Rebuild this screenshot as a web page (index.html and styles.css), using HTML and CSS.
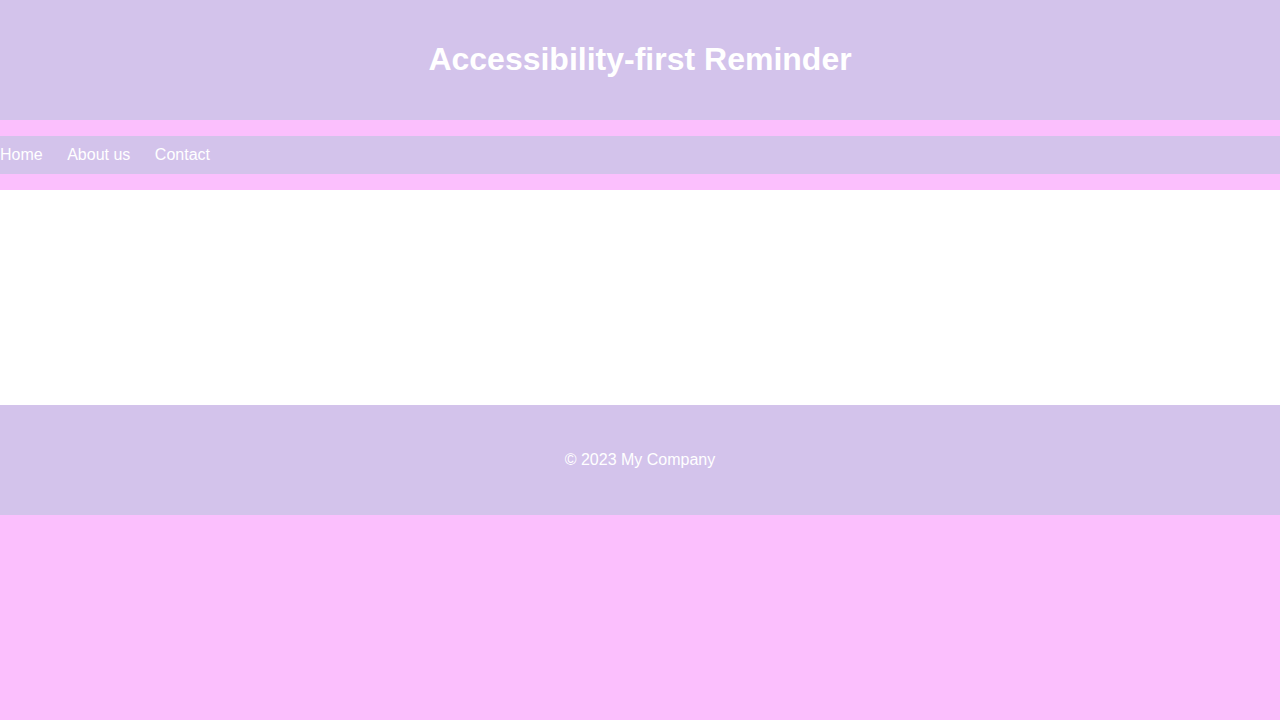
FILE: index.html
```html
<!DOCTYPE html>
<html lang="en">
<head>
<meta charset="utf-8">
<title>Accessibility-first Reminder</title>
<link rel="stylesheet" href="styles.css">
</head>
<body>
<header class="site-header">
  <h1 class="site-title">Accessibility-first Reminder</h1>
</header>
<nav class="site-nav">
  <ul class="nav-list">
    <li class="nav-item"><a class="nav-link" href="#">Home</a></li>
    <li class="nav-item"><a class="nav-link" href="#">About us</a></li>
    <li class="nav-item"><a class="nav-link" href="#">Contact</a></li>
  </ul>
</nav>
<main class="site-main"></main>
<footer class="site-footer">
  <p class="footer-text">&copy; 2023 My Company</p>
</footer>
</body>
</html>
```

FILE: styles.css
```css
body {
  margin: 0;
  background: #fbbffd;
  font-family: "Liberation Sans", Arial, sans-serif;
  color: #ffffff;
}
.site-header {
  background: #d3c3eb;
  padding: 20px;
  text-align: center;
}
.site-title {
  margin: 21.44px 0;
  font-size: 32px;
  line-height: 37px;
  font-weight: bold;
}
.site-nav {
  background: #fbbffd;
  padding: 16px 0;
}
.nav-list {
  list-style: none;
  margin: 0;
  padding: 0;
  background: #d3c3eb;
  display: flex;
  gap: 24.5px;
}
.nav-item {
  padding: 10px 0;
  font-size: 16px;
  line-height: 18px;
}
.nav-link {
  color: #ffffff;
  text-decoration: none;
}
.site-main {
  background: #ffffff;
  height: 215px;
}
.site-footer {
  background: #d3c3eb;
  padding: 30px 20px;
  text-align: center;
}
.footer-text {
  margin: 16px 0;
  font-size: 16px;
  line-height: 18px;
}
```
